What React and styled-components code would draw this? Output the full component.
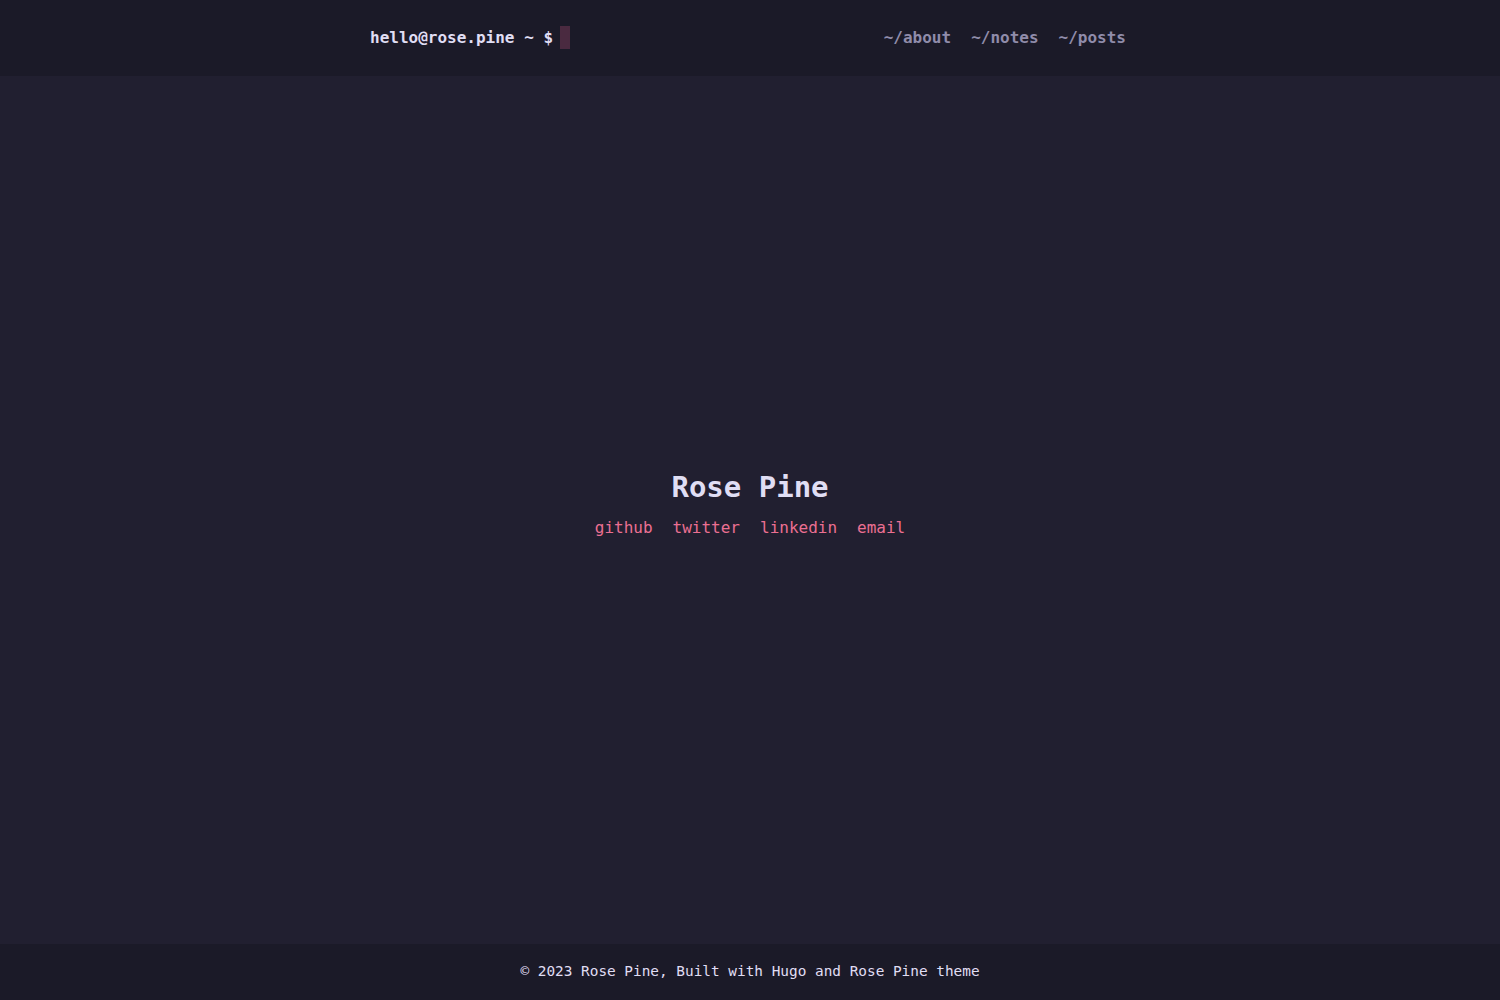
import React from 'react'
import styled, { createGlobalStyle } from 'styled-components'

const GlobalStyle = createGlobalStyle`
  html, body {
    margin: 0;
    padding: 0;
    background: #1f1d2e;
  }
  body {
    font-family: "DejaVu Sans Mono", "Liberation Mono", monospace;
    color: #e0def4;
  }
`

const Page = styled.div`
  min-height: 100vh;
  display: flex;
  flex-direction: column;
  background: #211f30;
`

const Header = styled.header`
  height: 76px;
  background: #1b1a28;
  display: flex;
  justify-content: center;
`

const HeaderInner = styled.div`
  width: 760px;
  padding: 0 4px 2px 0;
  box-sizing: border-box;
  display: flex;
  align-items: center;
  justify-content: space-between;
`

const Prompt = styled.a`
  display: flex;
  align-items: center;
  font-size: 16px;
  font-weight: bold;
  color: #e0def4;
  text-decoration: none;
  white-space: pre;
`

const Cursor = styled.span`
  display: inline-block;
  width: 10px;
  height: 23px;
  margin-left: 7px;
  background: #4a2a40;
`

const Nav = styled.nav`
  display: flex;
  gap: 20px;
`

const NavLink = styled.a`
  font-size: 16px;
  font-weight: bold;
  color: #908caa;
  text-decoration: none;
`

const Main = styled.main`
  flex: 1;
  display: flex;
  flex-direction: column;
  align-items: center;
  justify-content: center;
  padding-bottom: 14px;
`

const Title = styled.h1`
  margin: 0 0 14px;
  font-size: 29px;
  font-weight: bold;
  color: #e0def4;
`

const Socials = styled.div`
  display: flex;
  gap: 20px;
`

const SocialLink = styled.a`
  font-size: 16px;
  color: #eb6f92;
  text-decoration: none;
`

const Footer = styled.footer`
  height: 56px;
  padding-bottom: 2px;
  box-sizing: border-box;
  background: #1b1a28;
  display: flex;
  align-items: center;
  justify-content: center;
  font-size: 14.4px;
  color: #e0def4;
`

const navItems = ['~/about', '~/notes', '~/posts']
const socials = ['github', 'twitter', 'linkedin', 'email']

const App = () => {
  return (
    <>
      <GlobalStyle />
      <Page>
        <Header>
          <HeaderInner>
            <Prompt href="#">
              hello@rose.pine ~ $<Cursor />
            </Prompt>
            <Nav>
              {navItems.map((item) => (
                <NavLink key={item} href="#">{item}</NavLink>
              ))}
            </Nav>
          </HeaderInner>
        </Header>
        <Main>
          <Title>Rose Pine</Title>
          <Socials>
            {socials.map((s) => (
              <SocialLink key={s} href="#">{s}</SocialLink>
            ))}
          </Socials>
        </Main>
        <Footer>© 2023 Rose Pine, Built with Hugo and Rose Pine theme</Footer>
      </Page>
    </>
  )
}

export default App
